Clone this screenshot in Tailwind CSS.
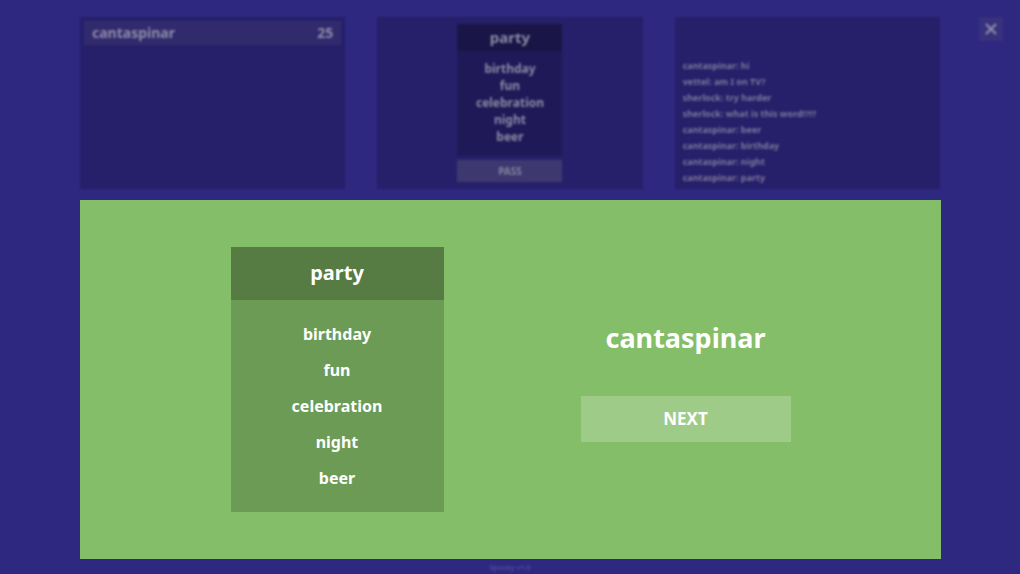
<!DOCTYPE html>
<html lang="en">
<head>
<meta charset="utf-8">
<meta name="viewport" content="width=device-width, initial-scale=1">
<title>Spooky</title>
<script src="https://cdn.jsdelivr.net/npm/@tailwindcss/browser@4"></script>
</head>
<body class="flex min-h-screen flex-col bg-[#2e2880] font-['Noto_Sans',sans-serif] font-bold text-white">
  <!-- Game board, dimmed behind the round result -->
  <div class="grid grid-cols-[80px_1fr_80px] pt-[17px] blur-[1px]">
    <main class="col-start-2 grid grid-cols-3 gap-8">
      <section class="min-h-[172px] bg-[#26206a] p-1" aria-label="Scores">
        <div class="flex h-6 items-center justify-between bg-[#312b6e] px-2 text-sm text-[#8f8ca9]">
          <span>cantaspinar</span><span>25</span>
        </div>
      </section>
      <section class="flex flex-col items-center bg-[#26206a] pt-[7px]" aria-label="Current word">
        <div class="w-[105px] bg-[#1f1a57] pb-[11px] text-center text-[#8c89a5]">
          <h2 class="mb-[9px] h-[27px] bg-[#191546] text-[15px] leading-[26px]">party</h2>
          <ul class="text-xs leading-[17px]">
            <li>birthday</li><li>fun</li><li>celebration</li><li>night</li><li>beer</li>
          </ul>
        </div>
        <button type="button" class="mt-1 h-[22px] w-[105px] bg-[#3d3870] text-[10px] text-[#85829f]">PASS</button>
      </section>
      <section class="flex flex-col justify-end bg-[#26206a] px-2 pb-[3px] text-[9px] leading-4 text-[#7c799b]" aria-label="Chat">
        <p>cantaspinar: hi</p>
        <p>vettel: am I on TV?</p>
        <p>sherlock: try harder</p>
        <p>sherlock: what is this word!?!?</p>
        <p>cantaspinar: beer</p>
        <p>cantaspinar: birthday</p>
        <p>cantaspinar: night</p>
        <p>cantaspinar: party</p>
      </section>
    </main>
    <button type="button" aria-label="Close" class="mr-[17px] flex size-6 items-center justify-center justify-self-end bg-[#38327d]">
      <svg class="size-6" viewBox="0 0 24 24" fill="none" stroke="#8d8aaa" stroke-width="2.4"><path d="M7 7l10 10M17 7L7 17"/></svg>
    </button>
  </div>

  <!-- Round result -->
  <section class="mt-[11px] mr-[79px] ml-20 flex grow items-center justify-center gap-[137px] bg-[#85be68] py-[46px]">
    <div class="w-[213px] bg-[#6b9b54] pb-4 text-center">
      <h2 class="mb-4 h-[53px] bg-[#567b43] text-xl leading-[51px]">party</h2>
      <ul class="text-base leading-9">
        <li>birthday</li><li>fun</li><li>celebration</li><li>night</li><li>beer</li>
      </ul>
    </div>
    <div class="flex w-[210px] flex-col items-center">
      <h1 class="text-[27px] leading-10">cantaspinar</h1>
      <button type="button" class="mt-[38px] h-[46px] w-full bg-[#9fcb88] text-[17px]">NEXT</button>
    </div>
  </section>
  <footer class="h-[15px] pt-[3px] text-center text-[7px] leading-3 text-[#4f4a94] blur-[1px]">Spooky v1.0</footer>
</body>
</html>
